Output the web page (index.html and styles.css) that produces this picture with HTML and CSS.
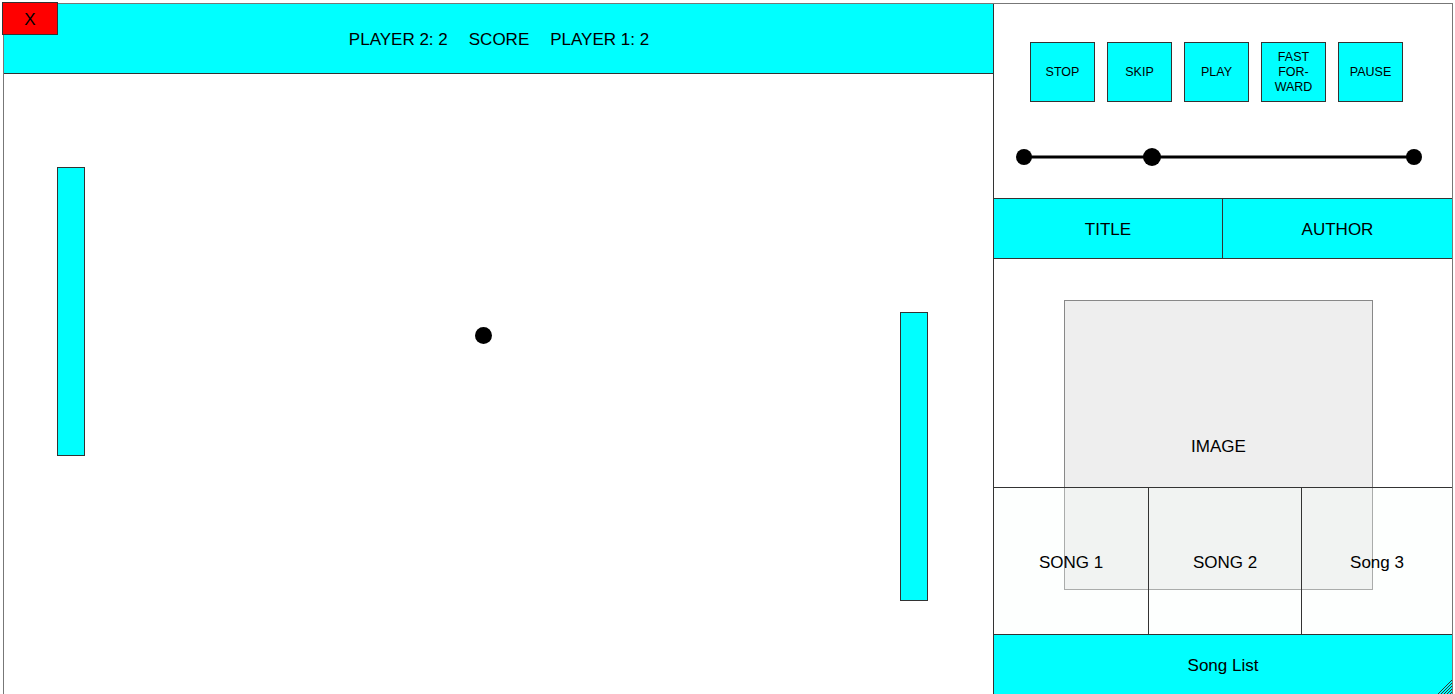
FILE: index.html
```html
<!DOCTYPE html>
<html>
<head>
<meta charset="utf-8">
<link rel="stylesheet" href="styles.css">
</head>
<body>
<div class="close">X</div>
<div class="app">
  <section class="game">
    <header class="scorebar">
      <span>PLAYER 2: 2</span>
      <span>SCORE</span>
      <span>PLAYER 1: 2</span>
    </header>
    <div class="field">
      <div class="paddle paddle-left"></div>
      <div class="ball"></div>
      <div class="paddle paddle-right"></div>
    </div>
  </section>
  <aside class="player">
    <div class="controls">
      <div class="buttons">
        <div class="btn">STOP</div>
        <div class="btn">SKIP</div>
        <div class="btn">PLAY</div>
        <div class="btn">FAST<br>FOR-<br>WARD</div>
        <div class="btn">PAUSE</div>
      </div>
      <svg class="slider" width="410" height="20" viewBox="0 0 410 20">
        <line x1="10" y1="10" x2="400" y2="10" stroke="#000" stroke-width="3"/>
        <circle cx="10" cy="10" r="8" fill="#000"/>
        <circle cx="138" cy="10" r="9" fill="#000"/>
        <circle cx="400" cy="10" r="8" fill="#000"/>
      </svg>
    </div>
    <div class="meta">
      <div class="meta-cell">TITLE</div>
      <div class="meta-cell">AUTHOR</div>
    </div>
    <div class="media">
      <div class="image">IMAGE</div>
      <div class="songs">
        <div class="song">SONG 1</div>
        <div class="song">SONG 2</div>
        <div class="song">Song 3</div>
      </div>
    </div>
    <div class="songlist">
      Song List
      <svg class="grip" width="16" height="16" viewBox="0 0 16 16">
        <path d="M16 2 L2 16 M16 5 L5 16 M16 8 L8 16 M16 11 L11 16 M16 14 L14 16" stroke="#333" stroke-width="1"/>
      </svg>
    </div>
  </aside>
</div>
</body>
</html>
```
FILE: styles.css
```css
html, body {
  margin: 0;
  padding: 0;
  overflow: hidden;
  background: #ffffff;
}

body {
  font-family: "Liberation Sans", Arial, sans-serif;
  color: #000;
}

.app {
  margin: 3px 0 0 3px;
  width: 1448px;
  height: 720px;
  border: 1px solid #777;
  display: flex;
}

.game {
  width: 989px;
  display: flex;
  flex-direction: column;
}

.scorebar {
  box-sizing: border-box;
  height: 70px;
  background: #00ffff;
  border-bottom: 1px solid #333;
  display: flex;
  justify-content: center;
  align-items: center;
  gap: 21px;
  font-size: 17px;
  padding-left: 1px;
  padding-top: 2px;
}

.field {
  position: relative;
  flex: 1;
}

.paddle {
  position: absolute;
  width: 26px;
  height: 287px;
  background: #00ffff;
  border: 1px solid #333;
}

.paddle-left {
  left: 53px;
  top: 93px;
}

.paddle-right {
  left: 896px;
  top: 238px;
}

.ball {
  position: absolute;
  left: 471px;
  top: 253px;
  width: 17px;
  height: 17px;
  border-radius: 50%;
  background: #000;
}

.close {
  position: absolute;
  left: 2px;
  top: 2px;
  width: 54px;
  height: 29px;
  box-sizing: content-box;
  background: #ff0000;
  border: 1px solid #333;
  font-size: 17px;
  display: flex;
  justify-content: center;
  align-items: center;
  padding-top: 2px;
  z-index: 2;
}

.player {
  width: 458px;
  border-left: 1px solid #333;
  display: flex;
  flex-direction: column;
}

.controls {
  border-bottom: 1px solid #333;
  padding-left: 36px;
  padding-top: 38px;
  box-sizing: border-box;
  height: 195px;
}

.buttons {
  display: flex;
  gap: 12px;
}

.btn {
  width: 63px;
  height: 58px;
  background: #00ffff;
  border: 1px solid #333;
  font-size: 12.5px;
  line-height: 15px;
  text-align: center;
  display: flex;
  justify-content: center;
  align-items: center;
}

.slider {
  display: block;
  margin-left: -16px;
  margin-top: 45px;
}

.meta {
  display: flex;
  height: 59px;
  border-bottom: 1px solid #333;
  background: #00ffff;
  font-size: 17px;
}

.meta-cell {
  display: flex;
  justify-content: center;
  align-items: center;
  padding-top: 2px;
}

.meta-cell:first-child {
  width: 228px;
  border-right: 1px solid #333;
}

.meta-cell:last-child {
  flex: 1;
}

.media {
  display: grid;
  grid-template-rows: 41px 187px 103px 44px;
  grid-template-columns: 70px 309px 1fr;
}

.image {
  grid-row: 2 / 4;
  grid-column: 2;
  background: #eeeeee;
  border: 1px solid #888;
  display: flex;
  justify-content: center;
  align-items: center;
  font-size: 17px;
  padding-top: 3px;
}

.songs {
  grid-row: 3 / 5;
  grid-column: 1 / 4;
  display: grid;
  grid-template-columns: 155px 153px 1fr;
  border-top: 1px solid #333;
  background: rgba(248, 255, 252, 0.3);
  z-index: 1;
  margin-left: -1px;
}

.song {
  display: flex;
  justify-content: center;
  align-items: center;
  font-size: 17px;
  padding-top: 3px;
}

.song:first-child {
  border-left: 1px solid #333;
}

.song + .song {
  border-left: 1px solid #333;
}

.songlist {
  position: relative;
  flex: 1;
  background: #00ffff;
  border-top: 1px solid #333;
  margin-left: -1px;
  border-left: 1px solid #333;
  font-size: 17px;
  text-align: center;
  padding-top: 21px;
  line-height: 20px;
}

.grip {
  position: absolute;
  left: 442px;
  top: 43px;
}
```
